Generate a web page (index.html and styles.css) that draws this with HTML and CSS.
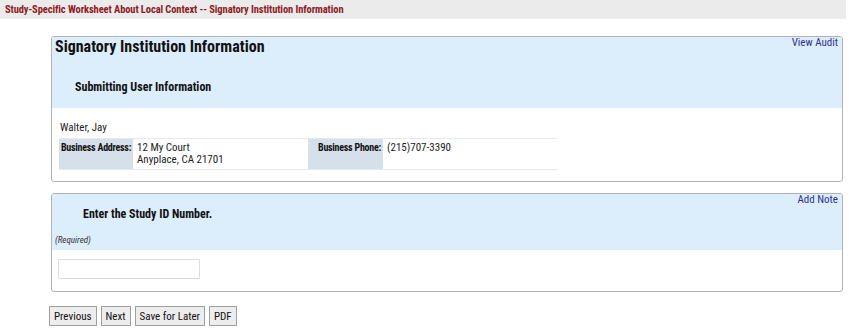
FILE: index.html
```html
<!DOCTYPE html>
<html lang="en">

<head>
    <meta charset="UTF-8">
    <title>Signatory Institution Information</title>
    <link rel="stylesheet" href="styles.css">
</head>

<body>
    <div class="page-title">Study-Specific Worksheet About Local Context -- Signatory Institution Information</div>

    <div class="main">
        <!-- Signatory institution section -->
        <div class="panel">
            <div class="panel-head">
                <a class="panel-link" href="#">View Audit</a>
                <h1>Signatory Institution Information</h1>
                <h2 class="sub-title">Submitting User Information</h2>
            </div>
            <div class="panel-body">
                <div class="user-name">Walter, Jay</div>
                <div class="info-table">
                    <div class="info-label">Business Address:</div>
                    <div class="info-value">12 My Court<br>Anyplace, CA 21701</div>
                    <div class="info-label">Business Phone:</div>
                    <div class="info-value">(215)707-3390</div>
                </div>
            </div>
        </div>

        <!-- Study ID question -->
        <div class="panel">
            <div class="panel-head">
                <a class="panel-link" href="#">Add Note</a>
                <h2 class="question">Enter the Study ID Number.</h2>
                <div class="required">(Required)</div>
            </div>
            <div class="panel-body answer">
                <input type="text" class="study-id">
            </div>
        </div>

        <div class="buttons">
            <button>Previous</button>
            <button>Next</button>
            <button>Save for Later</button>
            <button>PDF</button>
        </div>
    </div>
</body>

</html>
```
FILE: styles.css
```css
body {
    margin: 0;
    font-family: Roboto, "DejaVu Sans Condensed", sans-serif;
    font-stretch: condensed;
    font-size: 11px;
    color: #222;
}

.page-title {
    height: 19px;
    line-height: 19px;
    margin-right: 4px;
    padding-left: 5px;
    background-color: #ebebeb;
    color: #8e1b1f;
    font-weight: bold;
    font-size: 10.5px;
    letter-spacing: -0.1px;
}

.main {
    padding: 17px 7px 0 49px;
}

.panel {
    margin: 0 0 11px 2px;
    border: 1px solid #b2b2b2;
    border-radius: 3px;
    overflow: hidden;
}

.panel-head {
    background-color: #dcedfc;
    padding: 0 4px 0 3px;
}

.panel-link {
    float: right;
    line-height: 12px;
    color: #2e3192;
    text-decoration: none;
}

h1 {
    margin: 0;
    font-size: 16px;
    line-height: 20px;
    color: #111;
}

.sub-title {
    margin: 22px 0 0 20px;
    padding-bottom: 13px;
    font-size: 12px;
    line-height: 16px;
    color: #111;
}

.question {
    margin: 0 0 0 28px;
    padding-top: 12px;
    font-size: 12px;
    line-height: 16px;
    color: #111;
}

.required {
    margin-top: 12px;
    padding-bottom: 4px;
    font-size: 9px;
    font-style: italic;
    line-height: 12px;
    color: #333;
}

.panel-body {
    padding: 13px 7px 11px 7px;
}

.user-name {
    padding-left: 1px;
    line-height: 14px;
    margin-bottom: 3px;
}

.info-table {
    display: grid;
    grid-template-columns: 74px 173px 75px 175px;
    column-gap: 1px;
    width: 498px;
    border-top: 1px solid #e6e9ee;
    border-bottom: 1px solid #e6e9ee;
}

.info-label,
.info-value {
    padding: 3px 2px;
    line-height: 12px;
}

.info-label {
    background-color: #d6e0ea;
    text-align: right;
    white-space: nowrap;
    font-weight: bold;
    font-size: 10px;
    letter-spacing: -0.25px;
    color: #111;
}

.info-value {
    margin-left: 1px;
}

.answer {
    padding: 9px 6px 12px 6px;
}

.study-id {
    display: block;
    box-sizing: border-box;
    width: 142px;
    height: 20px;
    margin: 0;
    border: 1px solid #dcdcdc;
    border-radius: 1px;
}

.buttons {
    display: flex;
    gap: 4px;
    margin-top: 14px;
}

.buttons button {
    height: 20px;
    padding: 0 4px;
    font-family: inherit;
    font-stretch: condensed;
    font-size: 11px;
    color: #111;
    background-color: #ededed;
    border: 1px solid #a0a0a0;
    border-radius: 0;
}
```
